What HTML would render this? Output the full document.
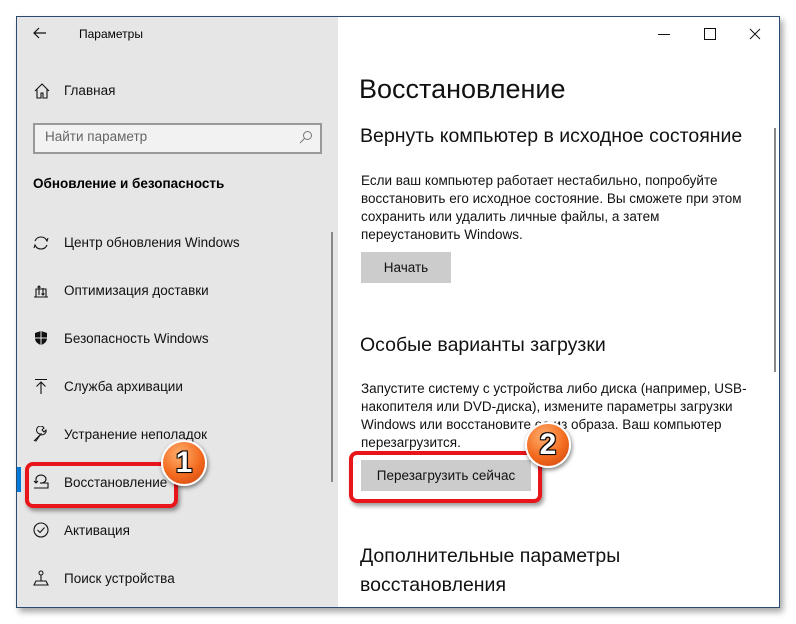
<!DOCTYPE html>
<html><head><meta charset="utf-8"><style>
*{margin:0;padding:0;box-sizing:border-box}
body{width:796px;height:624px;background:#fff;position:relative;overflow:hidden;font-family:"Liberation Sans",sans-serif;color:#000}
.a{position:absolute;white-space:nowrap}
#win{position:absolute;left:16px;top:16px;width:764px;height:592px;border:1px solid #2b4a6e;background:#fff;box-shadow:3px 4px 6px rgba(0,0,0,.35)}
#side{position:absolute;left:17px;top:17px;width:321px;height:590px;background:#e6e6e6}
.nav{font-size:13.5px;color:#111}
.b{font-size:13.5px;color:#111;line-height:18px;white-space:normal;width:400px}
.btn{position:absolute;background:#cccccc;font-size:13.5px;text-align:center;color:#111}
.red{position:absolute;border:4px solid #e8151b;border-radius:8px;box-shadow:2px 3px 4px rgba(0,0,0,.4)}
.badge{position:absolute;width:46px;height:46px;border-radius:50%;background:radial-gradient(circle at 40% 30%,#ffb070,#f36a1e 55%,#c94010);border:2px solid #fff;box-shadow:1px 2px 4px rgba(0,0,0,.5);color:#fff;font:bold 30px "Liberation Sans",sans-serif;text-align:center;line-height:42px;text-shadow:0 0 2px #000,1px 1px 0 #000,-1px -1px 0 #000,1px -1px 0 #000,-1px 1px 0 #000}
svg{position:absolute}
</style></head><body>
<div id="win"></div>
<div id="side"></div>
<svg style="left:33px;top:27px" width="14" height="12" viewBox="0 0 14 12"><path d="M13 6H1M6 1L1 6l5 5" stroke="#111" fill="none" stroke-width="1.2"/></svg>
<div class="a" style="left:79px;top:27px;font-size:12px">Параметры</div>
<svg style="left:658px;top:28px" width="110" height="12"><path d="M0 6.5h12" stroke="#111"/><rect x="46.5" y="0.5" width="11" height="11" fill="none" stroke="#111"/><path d="M92 1l10 10M102 1l-10 10" stroke="#111"/></svg>
<svg style="left:34px;top:83px" width="16" height="16" viewBox="0 0 16 16"><path d="M1 8L8 1l7 7M3 6v9h4v-5h2v5h4V6" stroke="#111" fill="none" stroke-width="1.1"/></svg>
<div class="a nav" style="left:64px;top:83px">Главная</div>
<div class="a" style="left:33px;top:123px;width:289px;height:31px;border:2px solid #999;background:#f2f2f2"></div>
<div class="a" style="left:45px;top:129px;font-size:13.5px;color:#666">Найти параметр</div>
<svg style="left:299px;top:130px" width="14" height="14"><circle cx="8.5" cy="5.5" r="4" stroke="#777" fill="none"/><path d="M5.5 8.5L1 13" stroke="#777"/></svg>
<div class="a" style="left:33px;top:176px;font-size:13.5px;font-weight:bold">Обновление и безопасность</div>
<div class="a" style="left:331px;top:232px;width:2px;height:250px;background:#888"></div>
<svg style="left:33px;top:235px" width="16" height="16"><path d="M2 6A6.5 6.5 0 0 1 14 6M14 10A6.5 6.5 0 0 1 2 10M12 3l2 3 1-3M4 13l-2-3-1 3" stroke="#111" fill="none" stroke-width="1.1"/></svg>
<div class="a nav" style="left:64px;top:235px">Центр обновления Windows</div>
<svg style="left:33px;top:283px" width="16" height="16"><path d="M1 14h14M3 14V6h10v8M6 12V3M4.5 4.5L6 3l1.5 1.5M10 5v7M8.5 10.5L10 12l1.5-1.5" stroke="#111" fill="none" stroke-width="1.1"/></svg>
<div class="a nav" style="left:64px;top:283px">Оптимизация доставки</div>
<svg style="left:33px;top:330px" width="16" height="16"><path d="M8 1l6 2v5c0 4-3 6-6 7C5 14 2 12 2 8V3z" fill="#111"/><path d="M8 1v14M2 8h12" stroke="#e6e6e6"/></svg>
<div class="a nav" style="left:64px;top:331px">Безопасность Windows</div>
<svg style="left:33px;top:378px" width="16" height="16"><path d="M2 1.5h12M8 4v12M3.5 8.5L8 4l4.5 4.5" stroke="#111" fill="none" stroke-width="1.1"/></svg>
<div class="a nav" style="left:64px;top:379px">Служба архивации</div>
<svg style="left:33px;top:426px" width="16" height="16"><path d="M1.5 14.5L8 8a4 4 0 1 1 3-6L9 4l2 2 2-2a4 4 0 0 1-5.5 4.5L3 15z" stroke="#111" fill="none" stroke-width="1"/></svg>
<div class="a nav" style="left:64px;top:427px">Устранение неполадок</div>
<div class="a" style="left:17px;top:467px;width:4px;height:25px;background:#0078d7"></div>
<svg style="left:33px;top:473px" width="16" height="16"><path d="M1 15h14v-5H9M3 10V6a5 4 0 1 1 4 4M1 8l2 2 2-2" stroke="#111" fill="none" stroke-width="1.1"/></svg>
<div class="a nav" style="left:64px;top:475px">Восстановление</div>
<svg style="left:33px;top:522px" width="16" height="16"><circle cx="8" cy="8" r="7" stroke="#111" fill="none" stroke-width="1.1"/><path d="M4.5 8l2.5 2.5 4.5-5" stroke="#111" fill="none" stroke-width="1.1"/></svg>
<div class="a nav" style="left:64px;top:523px">Активация</div>
<svg style="left:33px;top:570px" width="16" height="16"><circle cx="8" cy="3" r="2" stroke="#111" fill="none"/><path d="M8 5v6M1 15l2-4h10l2 4z" stroke="#111" fill="none" stroke-width="1.1"/></svg>
<div class="a nav" style="left:64px;top:571px">Поиск устройства</div>
<div class="a" style="left:774px;top:128px;width:2px;height:244px;background:#888"></div>
<div class="a" style="left:359px;top:74px;font-size:27px;color:#111">Восстановление</div>
<div class="a" style="left:360px;top:125px;font-size:19.5px;color:#111">Вернуть компьютер в исходное состояние</div>
<div class="a b" style="left:361px;top:172px">Если ваш компьютер работает нестабильно, попробуйте восстановить его исходное состояние. Вы сможете при этом сохранить или удалить личные файлы, а затем переустановить Windows.</div>
<div class="btn" style="left:361px;top:252px;width:90px;height:31px;line-height:31px">Начать</div>
<div class="a" style="left:360px;top:334px;font-size:19.5px;color:#111">Особые варианты загрузки</div>
<div class="a b" style="left:361px;top:380px">Запустите систему с устройства либо диска (например, USB-накопителя или DVD-диска), измените параметры загрузки Windows или восстановите ее из образа. Ваш компьютер перезагрузится.</div>
<div class="btn" style="left:361px;top:460px;width:170px;height:31px;line-height:31px">Перезагрузить сейчас</div>
<div class="a" style="left:360px;top:542px;font-size:19.5px;color:#111;line-height:29px">Дополнительные параметры<br>восстановления</div>
<div class="red" style="left:25px;top:462px;width:153px;height:46px"></div>
<div class="red" style="left:349px;top:451px;width:193px;height:52px"></div>
<div class="badge" style="left:161px;top:440px">1</div>
<div class="badge" style="left:525px;top:422px">2</div>
</body></html>
